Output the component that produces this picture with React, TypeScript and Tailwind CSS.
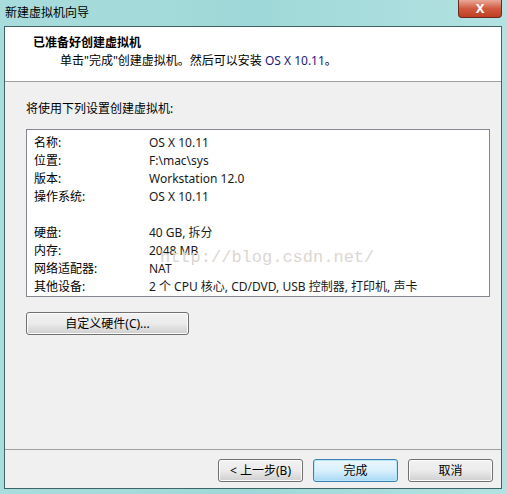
import React from "react";

const rows: [string, string][] = [
  ["名称:", "OS X 10.11"],
  ["位置:", "F:\\mac\\sys"],
  ["版本:", "Workstation 12.0"],
  ["操作系统:", "OS X 10.11"],
  ["", ""],
  ["硬盘:", "40 GB, 拆分"],
  ["内存:", "2048 MB"],
  ["网络适配器:", "NAT"],
  ["其他设备:", "2 个 CPU 核心, CD/DVD, USB 控制器, 打印机, 声卡"],
];

function Btn({ children, primary, className }: { children: React.ReactNode; primary?: boolean; className?: string }) {
  return (
    <div
      className={
        "flex h-[23px] items-center justify-center rounded-[3px] border text-[12px] text-black " +
        (primary
          ? "border-[#3c7fb1] bg-gradient-to-b from-[#eaf6fd] via-[#d9f0fc] to-[#a7d9f5] shadow-[inset_0_0_0_1px_#b8e6fb]"
          : "border-[#707070] bg-gradient-to-b from-[#f2f2f2] via-[#ebebeb] to-[#cfcfcf] shadow-[inset_0_0_0_1px_#fcfcfc]") +
        " " +
        (className ?? "")
      }
    >
      {children}
    </div>
  );
}

export default function App() {
  return (
    <div
      className="flex h-[494px] w-[507px] flex-col bg-gradient-to-r from-[#a9dcdc] via-[#9fd8d8] to-[#b3e2e2]"
      style={{ fontFamily: '"Noto Sans", "Noto Sans CJK SC", sans-serif' }}
    >
      {/* title bar */}
      <div className="relative flex h-[26px] items-center pl-[5px]">
        <span className="text-[12px] text-black">新建虚拟机向导</span>
        <div className="absolute right-[5px] top-0 flex h-[18px] w-[44px] items-center justify-center rounded-b-[4px] border border-t-0 border-[#6b2a21] bg-gradient-to-b from-[#e8a898] via-[#d05a40] to-[#c03d22]">
          <span className="text-[13px] font-bold leading-none text-white">X</span>
        </div>
      </div>

      {/* client area */}
      <div className="mb-[5px] ml-[4px] mr-[5px] flex flex-1 flex-col border border-[#3f6463] bg-[#f0f0f0]">
        <div className="flex h-[55px] flex-col border-b border-[#a0a0a0] bg-white pl-[28px] pt-[7px]">
          <div className="text-[12px] font-bold leading-[18px] text-black">已准备好创建虚拟机</div>
          <div className="pl-[27px] text-[12px] leading-[18px] text-black">
            单击"完成"创建虚拟机。然后可以安装 <span className="text-[#1a1a7a]">OS X 10.11</span>。
          </div>
        </div>

        <div className="flex flex-1 flex-col pl-[21px] pr-[11px]">
          <div className="pt-[18px] text-[12px] leading-[18px] text-black">将使用下列设置创建虚拟机:</div>
          <div className="relative mt-[11px] h-[168px] border border-[#828790] bg-white pl-[7px] pt-[4px]">
            {rows.map(([k, v], i) => (
              <div key={i} className="flex h-[18px] items-center text-[12px] text-black">
                <span className="w-[115px]">{k}</span>
                <span className="text-[#1a1a1a]">{v}</span>
              </div>
            ))}
            <span
              className="pointer-events-none absolute left-[133px] top-[115px] text-[17px] text-[#dcd6d2]"
              style={{ fontFamily: '"Liberation Mono", monospace' }}
            >
              http://blog.csdn.net/
            </span>
          </div>
          <Btn className="mt-[15px] w-[163px]">自定义硬件(C)...</Btn>
        </div>

        <div className="flex h-[39px] items-start justify-end gap-[10px] border-t border-[#a0a0a0] pr-[8px] pt-[9px]">
          <Btn className="w-[85px]">&lt; 上一步(B)</Btn>
          <Btn primary className="w-[85px]">完成</Btn>
          <Btn className="w-[85px]">取消</Btn>
        </div>
      </div>
    </div>
  );
}
